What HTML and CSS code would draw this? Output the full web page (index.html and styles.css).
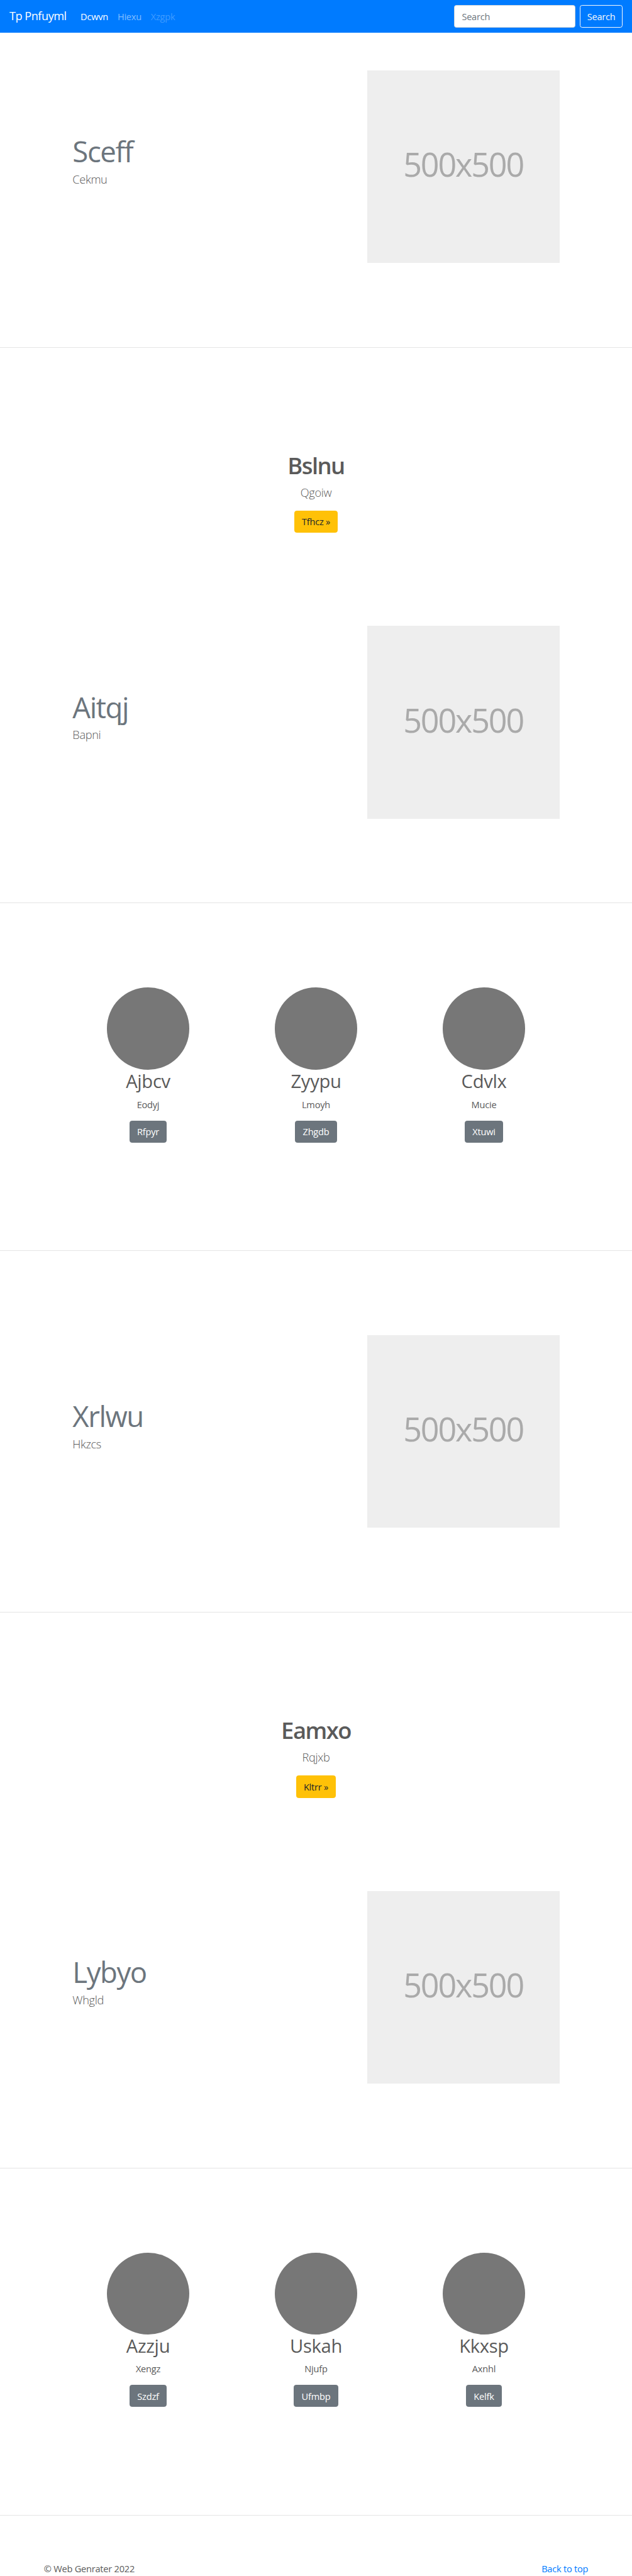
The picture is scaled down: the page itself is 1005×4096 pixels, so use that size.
FILE: index.html
```html
<!DOCTYPE html>
<html lang="en">
<head>
<meta charset="utf-8">
<title>Tp Pnfuyml</title>
<link rel="stylesheet" href="styles.css">
</head>
<body id="top">
<nav class="navbar">
  <a class="brand" href="#">Tp Pnfuyml</a>
  <div class="nav-links">
    <a class="nav-link active" href="#">Dcwvn</a>
    <a class="nav-link" href="#">Hiexu</a>
    <a class="nav-link disabled">Xzgpk</a>
  </div>
  <form class="search">
    <input class="search-input" type="text" placeholder="Search" aria-label="Search">
    <button class="btn btn-outline" type="button">Search</button>
  </form>
</nav>
<main>
  <section class="feature feature-first">
    <div class="feature-text"><h2 class="feature-heading">Sceff</h2><p class="lead">Cekmu</p></div>
    <div class="placeholder">500x500</div>
  </section>
  <hr class="divider">
  <section class="hero">
    <h1 class="hero-heading">Bslnu</h1>
    <p class="lead">Qgoiw</p>
    <a class="btn btn-warning" href="#">Tfhcz »</a>
  </section>
  <section class="feature">
    <div class="feature-text"><h2 class="feature-heading">Aitqj</h2><p class="lead">Bapni</p></div>
    <div class="placeholder">500x500</div>
  </section>
  <hr class="divider">
  <section class="cards">
    <div class="card"><div class="avatar"></div><h2 class="card-heading">Ajbcv</h2><p class="card-text">Eodyj</p><a class="btn btn-secondary" href="#">Rfpyr</a></div>
    <div class="card"><div class="avatar"></div><h2 class="card-heading">Zyypu</h2><p class="card-text">Lmoyh</p><a class="btn btn-secondary" href="#">Zhgdb</a></div>
    <div class="card"><div class="avatar"></div><h2 class="card-heading">Cdvlx</h2><p class="card-text">Mucie</p><a class="btn btn-secondary" href="#">Xtuwi</a></div>
  </section>
  <hr class="divider divider-flush">
  <section class="feature feature-spaced">
    <div class="feature-text"><h2 class="feature-heading">Xrlwu</h2><p class="lead">Hkzcs</p></div>
    <div class="placeholder">500x500</div>
  </section>
  <hr class="divider">
  <section class="hero">
    <h1 class="hero-heading">Eamxo</h1>
    <p class="lead">Rqjxb</p>
    <a class="btn btn-warning" href="#">Kltrr »</a>
  </section>
  <section class="feature">
    <div class="feature-text"><h2 class="feature-heading">Lybyo</h2><p class="lead">Whgld</p></div>
    <div class="placeholder">500x500</div>
  </section>
  <hr class="divider">
  <section class="cards cards-last">
    <div class="card"><div class="avatar"></div><h2 class="card-heading">Azzju</h2><p class="card-text">Xengz</p><a class="btn btn-secondary" href="#">Szdzf</a></div>
    <div class="card"><div class="avatar"></div><h2 class="card-heading">Uskah</h2><p class="card-text">Njufp</p><a class="btn btn-secondary" href="#">Ufmbp</a></div>
    <div class="card"><div class="avatar"></div><h2 class="card-heading">Kkxsp</h2><p class="card-text">Axnhl</p><a class="btn btn-secondary" href="#">Kelfk</a></div>
  </section>
  <hr class="divider divider-flush">
</main>
<footer class="footer">
  <span>© Web Genrater 2022</span>
  <a class="top-link" href="#top">Back to top</a>
</footer>
</body>
</html>
```

FILE: styles.css
```css
*, *::before, *::after { box-sizing: border-box; }

html { font-size: 9.303px; }

body {
  margin: 0;
  background: #fff;
  color: #5a5a5a;
  font-family: "Open Sans", "Noto Sans", sans-serif;
  font-size: 1.57rem;
  line-height: 2.4rem;
  letter-spacing: -0.016em;
}

h1, h2, p { margin: 0; }
a { text-decoration: none; }

/* Navigation */
.navbar {
  display: flex;
  align-items: center;
  height: 5.6rem;
  padding: 0 1.6rem;
  background: #007bff;
}
.brand {
  margin-right: 1.6rem;
  color: #fff;
  font-size: 1.96rem;
  line-height: 3rem;
  letter-spacing: -0.028em;
}
.nav-links { display: flex; flex: 1; }
.nav-link { padding: 0 0.8rem; color: rgba(255, 255, 255, 0.5); }
.nav-link.active { color: #fff; }
.nav-link.disabled { color: rgba(255, 255, 255, 0.25); }

.search { display: flex; gap: 0.8rem; }
.search-input {
  width: 20.7rem;
  height: 3.8rem;
  padding: 0 1.2rem;
  border: 1px solid #ced4da;
  border-radius: 0.4rem;
  background: #fff;
  color: #495057;
  font: inherit;
  letter-spacing: inherit;
}
.search-input::placeholder { color: #6c757d; opacity: 1; }

/* Buttons */
.btn {
  display: inline-flex;
  align-items: center;
  justify-content: center;
  height: 3.8rem;
  padding: 0 1.2rem;
  border: 1px solid transparent;
  border-radius: 0.4rem;
  background: transparent;
  font: inherit;
  letter-spacing: inherit;
  white-space: nowrap;
}
.btn-outline { width: 7.3rem; border-color: #f8f9fa; color: #f8f9fa; }
.btn-warning { border-color: #ffc107; background: #ffc107; color: #212529; }
.btn-secondary { border-color: #6c757d; background: #6c757d; color: #fff; }

.lead {
  font-size: 1.96rem;
  font-weight: 300;
  line-height: 3rem;
  letter-spacing: -0.02em;
}

.divider {
  height: 1px;
  margin: 14.4rem 0 0;
  border: 0;
  background: #e5e5e5;
}
.divider-flush { margin-top: 0; }

/* Text beside a square picture */
.feature {
  display: flex;
  justify-content: space-between;
  height: 32.9rem;
  padding: 0 12.4rem;
}
.feature-first { margin-top: 6.4rem; }
.feature-spaced { margin-top: 14.4rem; }
.feature-text { padding-top: 11.1rem; }
.feature-heading {
  margin-bottom: 0.6rem;
  color: #6c757d;
  font-size: 4.9rem;
  font-weight: 400;
  line-height: 5.5rem;
  letter-spacing: -0.032em;
}
.placeholder {
  display: flex;
  align-items: center;
  justify-content: center;
  width: 32.9rem;
  height: 32.9rem;
  padding-bottom: 0.8rem;
  background: #eee;
  color: #aaa;
  font-size: 5.6rem;
  line-height: 1;
  letter-spacing: -0.041em;
}

/* Centred call to action */
.hero {
  display: flex;
  flex-direction: column;
  align-items: center;
  height: 47.6rem;
  padding-top: 17.75rem;
}
.hero-heading {
  margin-bottom: 0.8rem;
  font-size: 3.92rem;
  font-weight: 600;
  line-height: 4.8rem;
  letter-spacing: -0.043em;
}
.hero .lead { margin-bottom: 1.5rem; }

/* Three-column cards */
.cards {
  display: grid;
  grid-template-columns: repeat(3, 28.7rem);
  justify-content: center;
  height: 59.3rem;
  padding-top: 14.4rem;
}
.cards-last { height: 59.2rem; }
.card { display: flex; flex-direction: column; align-items: center; }
.avatar {
  width: 14rem;
  height: 14rem;
  border-radius: 50%;
  background: #777;
}
.card-heading {
  margin: 0.12rem 0 0.78rem;
  font-size: 3.14rem;
  font-weight: 400;
  line-height: 3.84rem;
  letter-spacing: -0.012em;
}
.cards-last .card-heading { margin-bottom: 0.68rem; }
.card-text { margin-bottom: 1.56rem; }

.footer {
  display: flex;
  justify-content: space-between;
  padding: 7.9rem 7.5rem 0;
}
.top-link { color: #007bff; }
```
